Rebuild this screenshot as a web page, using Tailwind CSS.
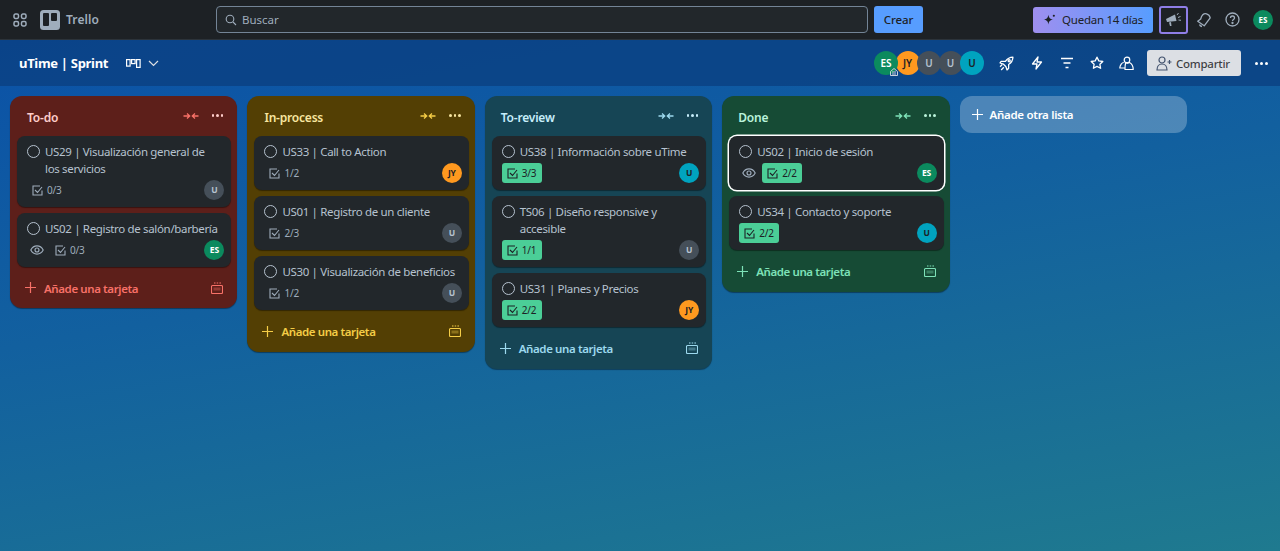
<!DOCTYPE html>
<html lang="es">
<head>
<meta charset="utf-8">
<script src="https://cdn.jsdelivr.net/npm/@tailwindcss/browser@4"></script>
<title>uTime | Sprint</title>
</head>
<body class="w-[1280px] h-[551px] overflow-hidden font-['Noto_Sans','Open_Sans',sans-serif] text-[#b6c2cf] bg-[linear-gradient(170deg,#0a50a8_0%,#12609f_45%,#1f7a8f_100%)]">

<!-- Top bar -->
<header class="h-[40px] bg-[#1d2125] border-b border-[#2c333a] flex items-center pl-[13px] pr-[7px]">
  <svg class="w-[14px] h-[14px] text-[#9fadbc]" viewBox="0 0 14 14" fill="none" stroke="currentColor" stroke-width="1.5"><rect x="1" y="1" width="4.5" height="4.5" rx="1.4"/><rect x="8.5" y="1" width="4.5" height="4.5" rx="1.4"/><rect x="1" y="8.5" width="4.5" height="4.5" rx="1.4"/><rect x="8.5" y="8.5" width="4.5" height="4.5" rx="1.4"/></svg>
  <svg class="ml-[13px] w-[20px] h-[20px]" viewBox="0 0 20 20"><rect width="20" height="20" rx="3.5" fill="#9fadbc"/><rect x="3" y="3" width="6" height="13" rx="1" fill="#1d2125"/><rect x="11" y="3" width="6" height="8" rx="1" fill="#1d2125"/></svg>
  <span class="ml-[6px] w-[32px] text-[12px] font-semibold text-[#9fadbc] tracking-[0.1px]">Trello</span>
  <div class="ml-[118px] w-[652px] h-[27px] border border-[#738496] rounded-[4px] bg-[#22272b] flex items-center pl-[8px] text-[11.5px] text-[#9fadbc]">
    <svg class="w-[12px] h-[12px]" viewBox="0 0 12 12" fill="none" stroke="currentColor" stroke-width="1.1"><circle cx="5" cy="5" r="3.8"/><path d="M8 8l3 3"/></svg>
    <span class="ml-[5px] mt-[1px]">Buscar</span>
  </div>
  <button class="ml-[6px] w-[49px] h-[27px] rounded-[3px] bg-[#579dff] text-[#1d2125] text-[11.5px] font-medium tracking-[-0.1px]">Crear</button>
  <button class="ml-[110px] w-[120px] h-[26px] rounded-[3px] bg-[linear-gradient(90deg,#9f8fef,#579dff)] text-[#1d2125] text-[11.5px] tracking-[-0.25px] flex items-center justify-center gap-[6px]">
    <svg class="w-[13px] h-[13px]" viewBox="0 0 12 12" fill="#1d2125"><path d="M5 1.500c.5 3 1.500 4 4.500 4.500-3 .5-4 1.500-4.500 4.500C4.500 7.500 3.500 6.500.5 6 3.500 5.500 4.500 4.500 5 1.500z"/><circle cx="10" cy="2.500" r="1"/></svg>
    Quedan 14 días
  </button>
  <div class="ml-[6px] w-[29px] h-[28px] rounded-[3px] border-2 border-[#8f7ee7] flex items-center justify-center">
    <svg class="w-[17px] h-[17px]" viewBox="0 0 17 17" fill="#9fadbc"><path d="M1 8l9-4.500 1.500 6.500L2 11z"/><path d="M4 11.500l1 3.500h1.500L6 11z"/><path d="M12 4l1.500-2M13 6.500l2.500-1M13.500 9l2.500.3" stroke="#9fadbc" stroke-width="1" fill="none"/></svg>
  </div>
  <svg class="ml-[8px] w-[16px] h-[16px] text-[#9fadbc]" viewBox="0 0 16 16" fill="none" stroke="currentColor" stroke-width="1.300" stroke-linejoin="round"><path d="M10.500 1.800c1.800.5 3.300 2 3.700 4l-6 8-6.500-4.600 3-2.200C5.500 3.500 7.500 1 10.500 1.800zM3.500 12.500c.3 1 1 1.800 2.500 2"/></svg>
  <svg class="ml-[13px] w-[15px] h-[15px] text-[#9fadbc]" viewBox="0 0 15 15" fill="none" stroke="currentColor" stroke-width="1.300"><circle cx="7.500" cy="7.500" r="6.500"/><path d="M5.500 6c0-1.200 1-2 2-2s2 .8 2 1.900c0 1.500-2 1.500-2 3"/><circle cx="7.500" cy="11" r=".5"/></svg>
  <span class="ml-[13px] w-[20px] h-[20px] rounded-full bg-[#0b8a5e] text-white text-[8px] font-bold flex items-center justify-center">ES</span>
</header>

<!-- Board bar -->
<div class="h-[46px] bg-[#0b3f7f]/75 flex items-center pl-[19px] pr-[12px]">
  <h1 class="w-[88px] whitespace-nowrap text-[13px] font-bold text-white leading-none tracking-[-0.3px]">uTime | Sprint</h1>
  <svg class="ml-[19px] w-[15px] h-[9px] text-white" viewBox="0 0 15 9" fill="none" stroke="currentColor" stroke-width="1.200"><rect x=".6" y=".6" width="3.500" height="6.500"/><rect x="5.600" y=".6" width="3.500" height="4"/><rect x="10.600" y=".6" width="3.500" height="7.800"/></svg>
  <svg class="ml-[7px] w-[11px] h-[7px] text-[#dcdfe4]" viewBox="0 0 11 7" fill="none" stroke="currentColor" stroke-width="1.200"><path d="M1 1l4.500 4.500L10 1"/></svg>

  <div class="ml-auto flex items-center">
    <span class="relative w-[24px] h-[24px] rounded-full bg-[#0b8a5e] text-white text-[10px] font-semibold flex items-center justify-center">ES
      <svg class="absolute right-[0px] bottom-[-1px] w-[8px] h-[8px]" viewBox="0 0 8 8" fill="none" stroke="#dcdfe4" stroke-width=".9"><path d="M.5 3.500L4 .5l3.500 3v4h-7zM2 4h4M2 6h4"/></svg>
    </span>
    <span class="ml-[-2.500px] w-[24px] h-[24px] rounded-full bg-[#ff991f] text-[#1d2125] text-[10px] font-semibold flex items-center justify-center">JY</span>
    <span class="ml-[-2.500px] w-[24px] h-[24px] rounded-full bg-[#454f59] text-[#b6c2cf] text-[10px] font-semibold flex items-center justify-center">U</span>
    <span class="ml-[-2.500px] w-[24px] h-[24px] rounded-full bg-[#454f59] text-[#b6c2cf] text-[10px] font-semibold flex items-center justify-center">U</span>
    <span class="ml-[-2.500px] w-[24px] h-[24px] rounded-full bg-[#00a3bf] text-[#1d2125] text-[10px] font-semibold flex items-center justify-center">U</span>
    <svg class="ml-[15px] w-[15px] h-[15px] text-white" viewBox="0 0 14 14" fill="none" stroke="currentColor" stroke-width="1.200" stroke-linejoin="round"><path d="M13 1c-3 0-5 1-7 4H2L1 6.500l3 1 2.500 2.500 1 3L9 11.500V8c3-2 4-4 4-7z"/><circle cx="9.500" cy="4.500" r="1"/><path d="M1 10l2-2M2 13l2.500-2.500"/></svg>
    <svg class="ml-[16px] w-[14px] h-[14px] text-white" viewBox="0 0 14 14" fill="none" stroke="currentColor" stroke-width="1.300" stroke-linejoin="round"><path d="M8 1L2.500 8H7l-1 5 5.500-7H7z"/></svg>
    <svg class="ml-[16px] w-[14px] h-[12px] text-white" viewBox="0 0 14 12" fill="none" stroke="currentColor" stroke-width="1.300"><path d="M1 1.500h12M3.500 6h7M5.500 10.500h3"/></svg>
    <svg class="ml-[16px] w-[14px] h-[14px] text-white" viewBox="0 0 14 14" fill="none" stroke="currentColor" stroke-width="1.300" stroke-linejoin="round"><path d="M7 1.200l1.800 3.700 4 .6-2.900 2.800.7 4L7 10.400l-3.600 1.900.7-4L1.200 5.500l4-.6z"/></svg>
    <svg class="ml-[15px] w-[15px] h-[15px] text-white" viewBox="0 0 15 15" fill="none" stroke="currentColor" stroke-width="1.200" stroke-linejoin="round"><circle cx="8" cy="4" r="2.800"/><path d="M4.800 6.500C3 6.500 1 9 .8 12h5.500M6 13.500h8.200c0-3-1.700-6-3.700-7-1.200.7-2.700.7-3.800 0-.6 2-.7 5-.7 7z"/></svg>
    <button class="ml-[13px] w-[94px] h-[26px] rounded-[3px] bg-[#dcdfe4] text-[#1d2125]/85 text-[11.500px] font-medium tracking-[-0.25px] flex items-center pl-[9px] gap-[4px]">
      <svg class="w-[16px] h-[15px] text-[#44546f]" viewBox="0 0 16 15" fill="none" stroke="currentColor" stroke-width="1.200"><circle cx="6" cy="4" r="3"/><path d="M1 14c0-3.500 2-6 5-6s5 2.500 5 6zM11.500 6h4M13.500 4v4"/></svg>
      <span class="mt-[1px]">Compartir</span>
    </button>
    <span class="ml-[14px] flex gap-[2px]"><i class="w-[3px] h-[3px] rounded-full bg-white"></i><i class="w-[3px] h-[3px] rounded-full bg-white"></i><i class="w-[3px] h-[3px] rounded-full bg-white"></i></span>
  </div>
</div>

<!-- Board -->
<main class="pt-[10px] pl-[10px] flex items-start gap-[10px]">

  <!-- To-do -->
  <section class="w-[227.4px] shrink-0 rounded-[12px] bg-[#5d1f1a] shadow-[0_1px_1px_rgba(0,0,0,0.4)] pl-[7px] pr-[6px]">
    <div class="h-[40px] flex items-center pl-[10px] pr-[8px] text-[#fecdca]">
      <h2 class="mt-[4px] text-[12px] font-semibold flex-1 tracking-[-0.2px]">To-do</h2>
      <svg class="mt-[-1px] w-[16px] h-[8px] text-[#f87168]" viewBox="0 0 15 8" fill="none" stroke="currentColor" stroke-width="1.300"><path d="M0 4h6M3.500 1.500L6.200 4 3.500 6.500M15 4H9M11.500 1.500L8.800 4l2.700 2.500"/></svg>
      <span class="mt-[-1px] ml-[13px] flex gap-[2px]"><i class="w-[2.500px] h-[2.500px] rounded-full bg-[#fecdca]"></i><i class="w-[2.500px] h-[2.500px] rounded-full bg-[#fecdca]"></i><i class="w-[2.500px] h-[2.500px] rounded-full bg-[#fecdca]"></i></span>
    </div>
    <div class="flex flex-col gap-[6px]">
      <article class="rounded-[8px] bg-[#22272b] shadow-[0_1px_1px_rgba(0,0,0,0.4)] pt-[7px] pb-[7px] pl-[10px] pr-[7px]">
        <div class="flex text-[11.500px] tracking-[-0.34px] leading-[17px]"><svg class="mt-[2px] shrink-0 w-[13px] h-[13px]" viewBox="0 0 13 13" fill="none" stroke="#b6c2cf" stroke-width="1"><circle cx="6.500" cy="6.500" r="6"/></svg><span class="ml-[5px] w-[165px]">US29 | Visualización general de los servicios</span></div>
        <div class="mt-[3px] h-[20px] flex items-center text-[10px] text-[#9fadbc] tracking-[-0.2px]">
          <svg class="ml-[5px] w-[11px] h-[11px]" viewBox="0 0 11 11" fill="none" stroke="currentColor" stroke-width="1.100"><path d="M10 5.500V10H1V1h7M3 5l2.500 2.500L10 2"/></svg><span class="ml-[4px]">0/3</span>
          <span class="ml-auto w-[20px] h-[20px] rounded-full bg-[#454f59] text-[#b6c2cf] text-[8.500px] font-bold flex items-center justify-center">U</span>
        </div>
      </article>
      <article class="rounded-[8px] bg-[#22272b] shadow-[0_1px_1px_rgba(0,0,0,0.4)] pt-[7px] pb-[7px] pl-[10px] pr-[7px]">
        <div class="flex text-[11.500px] tracking-[-0.34px] leading-[17px]"><svg class="mt-[2px] shrink-0 w-[13px] h-[13px]" viewBox="0 0 13 13" fill="none" stroke="#b6c2cf" stroke-width="1"><circle cx="6.500" cy="6.500" r="6"/></svg><span class="ml-[5px] whitespace-nowrap">US02 | Registro de salón/barbería</span></div>
        <div class="mt-[3px] h-[20px] flex items-center text-[10px] text-[#9fadbc] tracking-[-0.2px]">
          <svg class="ml-[3px] w-[14px] h-[14px]" viewBox="0 0 12 12" fill="none" stroke="currentColor" stroke-width="1"><path d="M.7 6C2 3.500 4 2.500 6 2.500S10 3.500 11.300 6C10 8.500 8 9.500 6 9.500S2 8.500.7 6z"/><circle cx="6" cy="6" r="1.700"/></svg>
          <svg class="ml-[11px] w-[11px] h-[11px]" viewBox="0 0 11 11" fill="none" stroke="currentColor" stroke-width="1.100"><path d="M10 5.500V10H1V1h7M3 5l2.500 2.500L10 2"/></svg><span class="ml-[4px]">0/3</span>
          <span class="ml-auto w-[20px] h-[20px] rounded-full bg-[#0b8a5e] text-white text-[8.500px] font-bold flex items-center justify-center">ES</span>
        </div>
      </article>
    </div>
    <div class="h-[41px] flex items-center pl-[8px] pr-[8px] text-[#f87168]">
      <svg class="w-[11px] h-[11px]" viewBox="0 0 11 11" stroke="currentColor" stroke-width="1.200"><path d="M5.500 0v11M0 5.500h11"/></svg>
      <span class="ml-[8px] mt-[2px] text-[11.500px] font-semibold flex-1 tracking-[-0.4px]">Añade una tarjeta</span>
      <svg class="w-[12px] h-[12px]" viewBox="0 0 12 12" fill="none" stroke="currentColor" stroke-width="1.100"><path d="M1.500 3.500h9a1 1 0 0 1 1 1v6a1 1 0 0 1-1 1h-9a1 1 0 0 1-1-1v-6a1 1 0 0 1 1-1zM3 1h1.500M5.700 1h1.500M8.400 1H10"/><rect x="2.500" y="5.500" width="7" height="3" fill="currentColor" fill-opacity=".35" stroke="none"/></svg>
    </div>
  </section>

  <!-- In-process -->
  <section class="w-[227.4px] shrink-0 rounded-[12px] bg-[#533f04] shadow-[0_1px_1px_rgba(0,0,0,0.4)] pl-[7px] pr-[6px]">
    <div class="h-[40px] flex items-center pl-[10px] pr-[8px] text-[#f8e6a0]">
      <h2 class="mt-[4px] text-[12px] font-semibold flex-1 tracking-[-0.2px]">In-process</h2>
      <svg class="mt-[-1px] w-[16px] h-[8px] text-[#f5cd47]" viewBox="0 0 15 8" fill="none" stroke="currentColor" stroke-width="1.300"><path d="M0 4h6M3.500 1.500L6.200 4 3.500 6.500M15 4H9M11.500 1.500L8.800 4l2.700 2.500"/></svg>
      <span class="mt-[-1px] ml-[13px] flex gap-[2px]"><i class="w-[2.500px] h-[2.500px] rounded-full bg-[#f8e6a0]"></i><i class="w-[2.500px] h-[2.500px] rounded-full bg-[#f8e6a0]"></i><i class="w-[2.500px] h-[2.500px] rounded-full bg-[#f8e6a0]"></i></span>
    </div>
    <div class="flex flex-col gap-[6px]">
      <article class="rounded-[8px] bg-[#22272b] shadow-[0_1px_1px_rgba(0,0,0,0.4)] pt-[7px] pb-[7px] pl-[10px] pr-[7px]">
        <div class="flex text-[11.500px] tracking-[-0.34px] leading-[17px]"><svg class="mt-[2px] shrink-0 w-[13px] h-[13px]" viewBox="0 0 13 13" fill="none" stroke="#b6c2cf" stroke-width="1"><circle cx="6.500" cy="6.500" r="6"/></svg><span class="ml-[5px]">US33 | Call to Action</span></div>
        <div class="mt-[3px] h-[20px] flex items-center text-[10px] text-[#9fadbc] tracking-[-0.2px]">
          <svg class="ml-[5px] w-[11px] h-[11px]" viewBox="0 0 11 11" fill="none" stroke="currentColor" stroke-width="1.100"><path d="M10 5.500V10H1V1h7M3 5l2.500 2.500L10 2"/></svg><span class="ml-[4px]">1/2</span>
          <span class="ml-auto w-[20px] h-[20px] rounded-full bg-[#ff991f] text-[#1d2125] text-[8.500px] font-bold flex items-center justify-center">JY</span>
        </div>
      </article>
      <article class="rounded-[8px] bg-[#22272b] shadow-[0_1px_1px_rgba(0,0,0,0.4)] pt-[7px] pb-[7px] pl-[10px] pr-[7px]">
        <div class="flex text-[11.500px] tracking-[-0.34px] leading-[17px]"><svg class="mt-[2px] shrink-0 w-[13px] h-[13px]" viewBox="0 0 13 13" fill="none" stroke="#b6c2cf" stroke-width="1"><circle cx="6.500" cy="6.500" r="6"/></svg><span class="ml-[5px]">US01 | Registro de un cliente</span></div>
        <div class="mt-[3px] h-[20px] flex items-center text-[10px] text-[#9fadbc] tracking-[-0.2px]">
          <svg class="ml-[5px] w-[11px] h-[11px]" viewBox="0 0 11 11" fill="none" stroke="currentColor" stroke-width="1.100"><path d="M10 5.500V10H1V1h7M3 5l2.500 2.500L10 2"/></svg><span class="ml-[4px]">2/3</span>
          <span class="ml-auto w-[20px] h-[20px] rounded-full bg-[#454f59] text-[#b6c2cf] text-[8.500px] font-bold flex items-center justify-center">U</span>
        </div>
      </article>
      <article class="rounded-[8px] bg-[#22272b] shadow-[0_1px_1px_rgba(0,0,0,0.4)] pt-[7px] pb-[7px] pl-[10px] pr-[7px]">
        <div class="flex text-[11.500px] tracking-[-0.34px] leading-[17px]"><svg class="mt-[2px] shrink-0 w-[13px] h-[13px]" viewBox="0 0 13 13" fill="none" stroke="#b6c2cf" stroke-width="1"><circle cx="6.500" cy="6.500" r="6"/></svg><span class="ml-[5px] whitespace-nowrap">US30 | Visualización de beneficios</span></div>
        <div class="mt-[3px] h-[20px] flex items-center text-[10px] text-[#9fadbc] tracking-[-0.2px]">
          <svg class="ml-[5px] w-[11px] h-[11px]" viewBox="0 0 11 11" fill="none" stroke="currentColor" stroke-width="1.100"><path d="M10 5.500V10H1V1h7M3 5l2.500 2.500L10 2"/></svg><span class="ml-[4px]">1/2</span>
          <span class="ml-auto w-[20px] h-[20px] rounded-full bg-[#454f59] text-[#b6c2cf] text-[8.500px] font-bold flex items-center justify-center">U</span>
        </div>
      </article>
    </div>
    <div class="h-[42px] flex items-center pl-[8px] pr-[8px] text-[#f5cd47]">
      <svg class="w-[11px] h-[11px]" viewBox="0 0 11 11" stroke="currentColor" stroke-width="1.200"><path d="M5.500 0v11M0 5.500h11"/></svg>
      <span class="ml-[8px] mt-[2px] text-[11.500px] font-semibold flex-1 tracking-[-0.4px]">Añade una tarjeta</span>
      <svg class="w-[12px] h-[12px]" viewBox="0 0 12 12" fill="none" stroke="currentColor" stroke-width="1.100"><path d="M1.500 3.500h9a1 1 0 0 1 1 1v6a1 1 0 0 1-1 1h-9a1 1 0 0 1-1-1v-6a1 1 0 0 1 1-1zM3 1h1.500M5.700 1h1.500M8.400 1H10"/><rect x="2.500" y="5.500" width="7" height="3" fill="currentColor" fill-opacity=".35" stroke="none"/></svg>
    </div>
  </section>

  <!-- To-review -->
  <section class="w-[227.4px] shrink-0 rounded-[12px] bg-[#164555] shadow-[0_1px_1px_rgba(0,0,0,0.4)] pl-[7px] pr-[6px]">
    <div class="h-[40px] flex items-center pl-[9px] pr-[8px] text-[#c6edfb]">
      <h2 class="mt-[4px] text-[12px] font-semibold flex-1 tracking-[-0.2px]">To-review</h2>
      <svg class="mt-[-1px] w-[16px] h-[8px] text-[#9dd9ee]" viewBox="0 0 15 8" fill="none" stroke="currentColor" stroke-width="1.300"><path d="M0 4h6M3.500 1.500L6.200 4 3.500 6.500M15 4H9M11.500 1.500L8.800 4l2.700 2.500"/></svg>
      <span class="mt-[-1px] ml-[13px] flex gap-[2px]"><i class="w-[2.500px] h-[2.500px] rounded-full bg-[#c6edfb]"></i><i class="w-[2.500px] h-[2.500px] rounded-full bg-[#c6edfb]"></i><i class="w-[2.500px] h-[2.500px] rounded-full bg-[#c6edfb]"></i></span>
    </div>
    <div class="flex flex-col gap-[6px]">
      <article class="rounded-[8px] bg-[#22272b] shadow-[0_1px_1px_rgba(0,0,0,0.4)] pt-[7px] pb-[7px] pl-[10px] pr-[7px]">
        <div class="flex text-[11.500px] tracking-[-0.34px] leading-[17px]"><svg class="mt-[2px] shrink-0 w-[13px] h-[13px]" viewBox="0 0 13 13" fill="none" stroke="#b6c2cf" stroke-width="1"><circle cx="6.500" cy="6.500" r="6"/></svg><span class="ml-[5px] whitespace-nowrap">US38 | Información sobre uTime</span></div>
        <div class="mt-[3px] h-[20px] flex items-center text-[10px] tracking-[-0.2px]">
          <span class="w-[40px] h-[20px] rounded-[3px] bg-[#4bce97] text-[#1d2125] flex items-center pl-[5px]"><svg class="w-[11px] h-[11px]" viewBox="0 0 11 11" fill="none" stroke="currentColor" stroke-width="1.100"><path d="M10 5.500V10H1V1h7M3 5l2.500 2.500L10 2"/></svg><span class="ml-[4px]">3/3</span></span>
          <span class="ml-auto w-[20px] h-[20px] rounded-full bg-[#00a3bf] text-[#1d2125] text-[8.500px] font-bold flex items-center justify-center">U</span>
        </div>
      </article>
      <article class="rounded-[8px] bg-[#22272b] shadow-[0_1px_1px_rgba(0,0,0,0.4)] pt-[7px] pb-[7px] pl-[10px] pr-[7px]">
        <div class="flex text-[11.500px] tracking-[-0.34px] leading-[17px]"><svg class="mt-[2px] shrink-0 w-[13px] h-[13px]" viewBox="0 0 13 13" fill="none" stroke="#b6c2cf" stroke-width="1"><circle cx="6.500" cy="6.500" r="6"/></svg><span class="ml-[5px] w-[180px]">TS06 | Diseño responsive y accesible</span></div>
        <div class="mt-[3px] h-[20px] flex items-center text-[10px] tracking-[-0.2px]">
          <span class="w-[40px] h-[20px] rounded-[3px] bg-[#4bce97] text-[#1d2125] flex items-center pl-[5px]"><svg class="w-[11px] h-[11px]" viewBox="0 0 11 11" fill="none" stroke="currentColor" stroke-width="1.100"><path d="M10 5.500V10H1V1h7M3 5l2.500 2.500L10 2"/></svg><span class="ml-[4px]">1/1</span></span>
          <span class="ml-auto w-[20px] h-[20px] rounded-full bg-[#454f59] text-[#b6c2cf] text-[8.500px] font-bold flex items-center justify-center">U</span>
        </div>
      </article>
      <article class="rounded-[8px] bg-[#22272b] shadow-[0_1px_1px_rgba(0,0,0,0.4)] pt-[7px] pb-[7px] pl-[10px] pr-[7px]">
        <div class="flex text-[11.500px] tracking-[-0.34px] leading-[17px]"><svg class="mt-[2px] shrink-0 w-[13px] h-[13px]" viewBox="0 0 13 13" fill="none" stroke="#b6c2cf" stroke-width="1"><circle cx="6.500" cy="6.500" r="6"/></svg><span class="ml-[5px]">US31 | Planes y Precios</span></div>
        <div class="mt-[3px] h-[20px] flex items-center text-[10px] tracking-[-0.2px]">
          <span class="w-[40px] h-[20px] rounded-[3px] bg-[#4bce97] text-[#1d2125] flex items-center pl-[5px]"><svg class="w-[11px] h-[11px]" viewBox="0 0 11 11" fill="none" stroke="currentColor" stroke-width="1.100"><path d="M10 5.500V10H1V1h7M3 5l2.500 2.500L10 2"/></svg><span class="ml-[4px]">2/2</span></span>
          <span class="ml-auto w-[20px] h-[20px] rounded-full bg-[#ff991f] text-[#1d2125] text-[8.500px] font-bold flex items-center justify-center">JY</span>
        </div>
      </article>
    </div>
    <div class="h-[42px] flex items-center pl-[8px] pr-[8px] text-[#9dd9ee]">
      <svg class="w-[11px] h-[11px]" viewBox="0 0 11 11" stroke="currentColor" stroke-width="1.200"><path d="M5.500 0v11M0 5.500h11"/></svg>
      <span class="ml-[8px] mt-[2px] text-[11.500px] font-semibold flex-1 tracking-[-0.4px]">Añade una tarjeta</span>
      <svg class="w-[12px] h-[12px]" viewBox="0 0 12 12" fill="none" stroke="currentColor" stroke-width="1.100"><path d="M1.500 3.500h9a1 1 0 0 1 1 1v6a1 1 0 0 1-1 1h-9a1 1 0 0 1-1-1v-6a1 1 0 0 1 1-1zM3 1h1.500M5.700 1h1.500M8.400 1H10"/><rect x="2.500" y="5.500" width="7" height="3" fill="currentColor" fill-opacity=".35" stroke="none"/></svg>
    </div>
  </section>

  <!-- Done -->
  <section class="w-[227.4px] shrink-0 rounded-[12px] bg-[#164b35] shadow-[0_1px_1px_rgba(0,0,0,0.4)] pl-[7px] pr-[6px]">
    <div class="h-[40px] flex items-center pl-[9px] pr-[8px] text-[#baf3db]">
      <h2 class="mt-[4px] text-[12px] font-semibold flex-1 tracking-[-0.2px]">Done</h2>
      <svg class="mt-[-1px] w-[16px] h-[8px] text-[#7ee2b8]" viewBox="0 0 15 8" fill="none" stroke="currentColor" stroke-width="1.300"><path d="M0 4h6M3.500 1.500L6.200 4 3.500 6.500M15 4H9M11.500 1.500L8.800 4l2.700 2.500"/></svg>
      <span class="mt-[-1px] ml-[13px] flex gap-[2px]"><i class="w-[2.500px] h-[2.500px] rounded-full bg-[#baf3db]"></i><i class="w-[2.500px] h-[2.500px] rounded-full bg-[#baf3db]"></i><i class="w-[2.500px] h-[2.500px] rounded-full bg-[#baf3db]"></i></span>
    </div>
    <div class="flex flex-col gap-[6px]">
      <article class="rounded-[8px] bg-[#22272b] shadow-[0_0_0_1.500px_#fff] pt-[7px] pb-[7px] pl-[10px] pr-[7px]">
        <div class="flex text-[11.500px] tracking-[-0.34px] leading-[17px]"><svg class="mt-[2px] shrink-0 w-[13px] h-[13px]" viewBox="0 0 13 13" fill="none" stroke="#b6c2cf" stroke-width="1"><circle cx="6.500" cy="6.500" r="6"/></svg><span class="ml-[5px]">US02 | Inicio de sesión</span></div>
        <div class="mt-[3px] h-[20px] flex items-center text-[10px] tracking-[-0.2px]">
          <svg class="ml-[3px] w-[14px] h-[14px] text-[#9fadbc]" viewBox="0 0 12 12" fill="none" stroke="currentColor" stroke-width="1"><path d="M.7 6C2 3.500 4 2.500 6 2.500S10 3.500 11.300 6C10 8.500 8 9.500 6 9.500S2 8.500.7 6z"/><circle cx="6" cy="6" r="1.700"/></svg>
          <span class="ml-[6px] w-[40px] h-[20px] rounded-[3px] bg-[#4bce97] text-[#1d2125] flex items-center pl-[5px]"><svg class="w-[11px] h-[11px]" viewBox="0 0 11 11" fill="none" stroke="currentColor" stroke-width="1.100"><path d="M10 5.500V10H1V1h7M3 5l2.500 2.500L10 2"/></svg><span class="ml-[4px]">2/2</span></span>
          <span class="ml-auto w-[20px] h-[20px] rounded-full bg-[#0b8a5e] text-white text-[8.500px] font-bold flex items-center justify-center">ES</span>
        </div>
      </article>
      <article class="rounded-[8px] bg-[#22272b] shadow-[0_1px_1px_rgba(0,0,0,0.4)] pt-[7px] pb-[7px] pl-[10px] pr-[7px]">
        <div class="flex text-[11.500px] tracking-[-0.34px] leading-[17px]"><svg class="mt-[2px] shrink-0 w-[13px] h-[13px]" viewBox="0 0 13 13" fill="none" stroke="#b6c2cf" stroke-width="1"><circle cx="6.500" cy="6.500" r="6"/></svg><span class="ml-[5px]">US34 | Contacto y soporte</span></div>
        <div class="mt-[3px] h-[20px] flex items-center text-[10px] tracking-[-0.2px]">
          <span class="w-[40px] h-[20px] rounded-[3px] bg-[#4bce97] text-[#1d2125] flex items-center pl-[5px]"><svg class="w-[11px] h-[11px]" viewBox="0 0 11 11" fill="none" stroke="currentColor" stroke-width="1.100"><path d="M10 5.500V10H1V1h7M3 5l2.500 2.500L10 2"/></svg><span class="ml-[4px]">2/2</span></span>
          <span class="ml-auto w-[20px] h-[20px] rounded-full bg-[#00a3bf] text-[#1d2125] text-[8.500px] font-bold flex items-center justify-center">U</span>
        </div>
      </article>
    </div>
    <div class="h-[42px] flex items-center pl-[8px] pr-[8px] text-[#7ee2b8]">
      <svg class="w-[11px] h-[11px]" viewBox="0 0 11 11" stroke="currentColor" stroke-width="1.200"><path d="M5.500 0v11M0 5.500h11"/></svg>
      <span class="ml-[8px] mt-[2px] text-[11.500px] font-semibold flex-1 tracking-[-0.4px]">Añade una tarjeta</span>
      <svg class="w-[12px] h-[12px]" viewBox="0 0 12 12" fill="none" stroke="currentColor" stroke-width="1.100"><path d="M1.500 3.500h9a1 1 0 0 1 1 1v6a1 1 0 0 1-1 1h-9a1 1 0 0 1-1-1v-6a1 1 0 0 1 1-1zM3 1h1.500M5.700 1h1.500M8.400 1H10"/><rect x="2.500" y="5.500" width="7" height="3" fill="currentColor" fill-opacity=".35" stroke="none"/></svg>
    </div>
  </section>

  <!-- Add list -->
  <button class="w-[227.4px] h-[37px] shrink-0 rounded-[12px] bg-white/25 text-white text-[11.500px] font-semibold tracking-[-0.3px] flex items-center pl-[12px]">
    <svg class="w-[11px] h-[11px]" viewBox="0 0 11 11" stroke="currentColor" stroke-width="1.200"><path d="M5.500 0v11M0 5.500h11"/></svg>
    <span class="ml-[7px]">Añade otra lista</span>
  </button>
</main>
</body>
</html>
